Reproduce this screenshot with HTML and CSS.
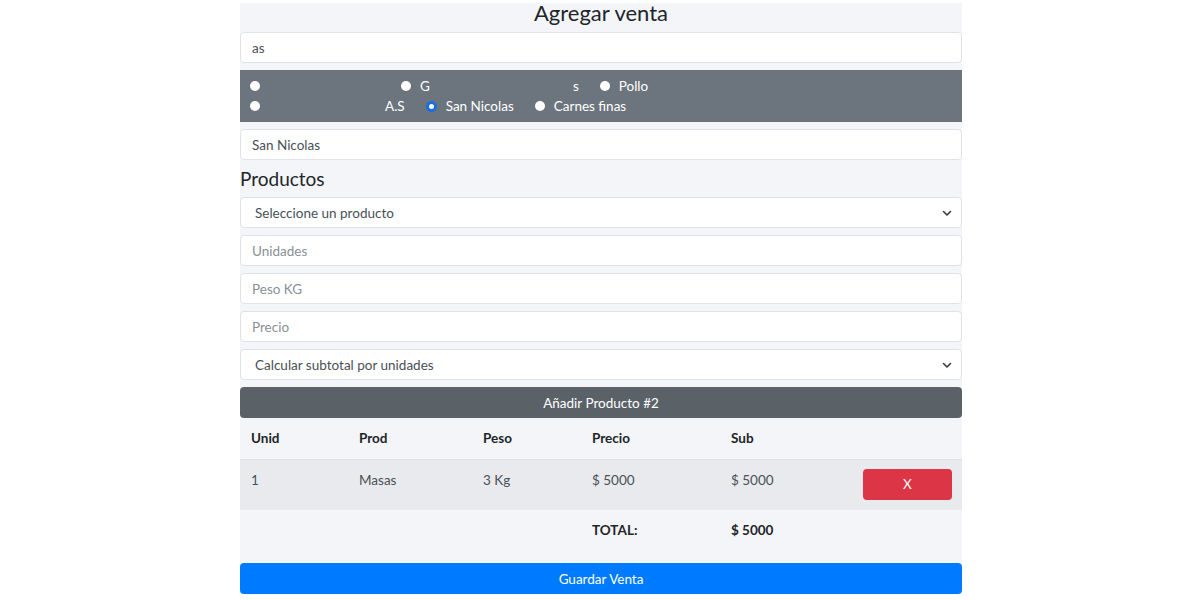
FILE: index.html
```html
<!DOCTYPE html>
<html lang="es">
<head>
<meta charset="utf-8">
<title>Agregar venta</title>
<link rel="stylesheet" href="styles.css">
</head>
<body>
<div class="container">
  <h1 class="title">Agregar venta</h1>
  <div class="field"><span class="value">as</span></div>

  <div class="radio-panel">
    <div class="radio-row">
      <label class="opt"><span class="radio"></span><span class="spacer sp-a"></span></label>
      <label class="opt"><span class="radio"></span><span class="txt">G</span><span class="spacer sp-b"></span><span class="txt">s</span></label>
      <label class="opt"><span class="radio"></span><span class="txt">Pollo</span></label>
    </div>
    <div class="radio-row">
      <label class="opt"><span class="radio"></span><span class="spacer sp-c"></span><span class="txt">A.S</span></label>
      <label class="opt"><span class="radio checked"></span><span class="txt">San Nicolas</span></label>
      <label class="opt"><span class="radio"></span><span class="txt">Carnes finas</span></label>
    </div>
  </div>

  <div class="field"><span class="value">San Nicolas</span></div>

  <h2 class="subtitle">Productos</h2>

  <div class="field select"><span class="value">Seleccione un producto</span>
    <svg class="chev" width="10" height="8" viewBox="0 0 10 8"><path d="M1.5 2.5 L5 6 L8.5 2.5" fill="none" stroke="#343a40" stroke-width="1.6" stroke-linecap="round" stroke-linejoin="round"/></svg>
  </div>
  <div class="field"><span class="placeholder">Unidades</span></div>
  <div class="field"><span class="placeholder">Peso KG</span></div>
  <div class="field"><span class="placeholder">Precio</span></div>
  <div class="field select"><span class="value">Calcular subtotal por unidades</span>
    <svg class="chev" width="10" height="8" viewBox="0 0 10 8"><path d="M1.5 2.5 L5 6 L8.5 2.5" fill="none" stroke="#343a40" stroke-width="1.6" stroke-linecap="round" stroke-linejoin="round"/></svg>
  </div>

  <button class="btn btn-dark">Añadir Producto #2</button>

  <table class="items">
    <colgroup>
      <col class="c1"><col class="c2"><col class="c3"><col class="c4"><col class="c5"><col class="c6">
    </colgroup>
    <thead>
      <tr><th>Unid</th><th>Prod</th><th>Peso</th><th>Precio</th><th>Sub</th><th></th></tr>
    </thead>
    <tbody>
      <tr class="item-row">
        <td>1</td><td>Masas</td><td>3 Kg</td><td>$ 5000</td><td>$ 5000</td>
        <td class="act"><button class="btn btn-danger">X</button></td>
      </tr>
      <tr class="total-row">
        <td></td><td></td><td></td><td class="strong">TOTAL:</td><td class="strong">$ 5000</td><td></td>
      </tr>
    </tbody>
  </table>

  <div class="footer-gap"></div>
  <button class="btn btn-primary">Guardar Venta</button>
</div>
</body>
</html>
```

FILE: styles.css
```css
* { box-sizing: border-box; }

html, body {
  margin: 0;
  padding: 0;
  background: #ffffff;
}

body {
  font-family: Lato, "Liberation Sans", sans-serif;
  font-size: 13.5px;
  color: #212529;
}

.container {
  width: 722px;
  margin: 3px 0 0 calc(50% - 360px);
  background: #f4f5f8;
  display: flex;
  flex-direction: column;
}

.title {
  margin: 0;
  height: 29px;
  font-size: 22px;
  font-weight: 400;
  line-height: 20px;
  text-align: center;
  color: #212529;
}

.field {
  height: 31px;
  background: #ffffff;
  border: 1px solid #dfe2e6;
  border-radius: 4px;
  display: flex;
  align-items: center;
  padding: 0 11px;
  color: #495057;
  margin-bottom: 7px;
}

.field.select {
  padding: 0 9px 0 14px;
  justify-content: space-between;
}

.placeholder { color: #8a9096; }

.radio-panel {
  background: #6c757d;
  height: 52px;
  padding: 6px 10px 0;
  margin-bottom: 7px;
  color: #ffffff;
}

.radio-row {
  display: flex;
  align-items: center;
  height: 20px;
}

.opt {
  display: flex;
  align-items: center;
  margin-right: 21px;
}

.radio {
  width: 10px;
  height: 10px;
  border-radius: 50%;
  background: #ffffff;
  margin-right: 9px;
  flex: none;
}

.radio.checked {
  width: 11px;
  height: 11px;
  background: #ffffff;
  border: 3px solid #1a6fe0;
}

.spacer { display: inline-block; height: 10px; }
.sp-a { width: 111px; }
.sp-b { width: 143px; }
.sp-c { width: 116px; }

.subtitle {
  margin: 0;
  height: 30px;
  font-size: 19px;
  font-weight: 400;
  line-height: 24px;
  padding: 0;
  color: #212529;
}

.chev { flex: none; }

.btn {
  font-family: Lato, "Liberation Sans", sans-serif;
  font-size: 13.5px;
  border: none;
  border-radius: 4px;
  color: #ffffff;
  height: 31px;
  padding: 0;
  width: 100%;
}

.btn-dark { background: #5a6268; }
.btn-primary { background: #007bff; }

.btn-danger {
  background: #dc3545;
  width: 89px;
  height: 31px;
}

.items {
  width: 100%;
  border-collapse: collapse;
  table-layout: fixed;
}

.c1 { width: 108px; }
.c2 { width: 124px; }
.c3 { width: 109px; }
.c4 { width: 139px; }
.c5 { width: 133px; }
.c6 { width: 109px; }

.items th {
  text-align: left;
  font-weight: 700;
  height: 41px;
  padding: 0 11px;
  border-bottom: 1px solid #dee2e6;
  color: #212529;
}

.items td {
  padding: 0 11px;
  color: #495057;
}

.item-row td {
  background: #e9eaed;
  height: 51px;
  vertical-align: top;
  padding-top: 12px;
}

.item-row td.act {
  padding: 9px 10px 0;
  text-align: left;
}

.total-row td {
  height: 40px;
}

.total-row td.strong {
  font-weight: 700;
  color: #212529;
}

.footer-gap { height: 13px; }
```
